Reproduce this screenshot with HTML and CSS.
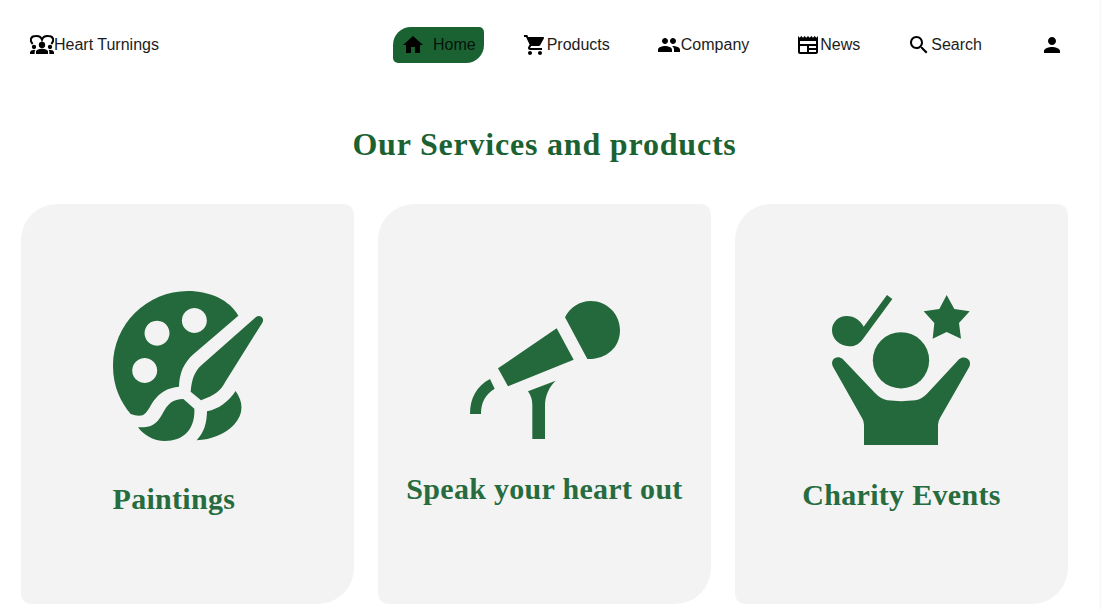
FILE: index.html
```html
<!DOCTYPE html>
<html lang="en">
<head>
<meta charset="utf-8">
<meta name="viewport" content="width=device-width, initial-scale=1">
<title>Heart Turnings</title>
<link rel="stylesheet" href="styles.css">
</head>
<body>
<div class="page">
  <header class="header">
    <a class="brand" href="#">
      <svg class="icon" viewBox="60 54 72 72" aria-hidden="true">
        <path d="M68 87C58 76 62 63 77 63C88 62 94 68 96 74C98 68 104 62 115 63C130 63 134 76 124 87" fill="none" stroke="#000" stroke-width="6"/>
        <circle cx="96" cy="90" r="9.500"/><circle cx="72" cy="96" r="6.500"/><circle cx="120" cy="96" r="6.500"/>
        <path d="M78 117V109Q81 101 96 101T114 109V117ZM60 117V111Q62 105 70 105H76Q74 108 74 111V117ZM132 117V111Q130 105 122 105H116Q118 108 118 111V117Z"/>
      </svg><span>Heart Turnings</span>
    </a>
    <nav class="nav" aria-label="Main">
      <a class="nav-link active" href="#" aria-current="page"><svg class="icon" viewBox="0 0 24 24" aria-hidden="true"><path d="M10 20v-6h4v6h5v-8h3L12 3 2 12h3v8z"/></svg><span>Home</span></a>
      <a class="nav-link" href="#"><svg class="icon" viewBox="0 0 24 24" aria-hidden="true"><path d="M7 18c-1.1 0-1.99.9-1.99 2S5.9 22 7 22s2-.9 2-2-.9-2-2-2zM1 2v2h2l3.6 7.59-1.35 2.45c-.16.28-.25.61-.25.96 0 1.1.9 2 2 2h12v-2H7.42c-.14 0-.25-.11-.25-.25l.03-.12.9-1.63h7.45c.75 0 1.41-.41 1.75-1.03l3.58-6.49c.08-.14.12-.31.12-.48 0-.55-.45-1-1-1H5.21l-.94-2H1zm16 16c-1.1 0-1.99.9-1.99 2s.89 2 1.99 2 2-.9 2-2-.9-2-2-2z"/></svg><span>Products</span></a>
      <a class="nav-link" href="#"><svg class="icon" viewBox="0 0 24 24" aria-hidden="true"><path d="M16 11c1.66 0 2.99-1.34 2.99-3S17.66 5 16 5c-1.66 0-3 1.34-3 3s1.34 3 3 3zm-8 0c1.66 0 2.99-1.34 2.99-3S9.66 5 8 5C6.34 5 5 6.34 5 8s1.34 3 3 3zm0 2c-2.33 0-7 1.17-7 3.5V19h14v-2.5c0-2.33-4.67-3.5-7-3.5zm8 0c-.29 0-.62.02-.97.05 1.16.84 1.97 1.97 1.97 3.45V19h6v-2.5c0-2.33-4.67-3.5-7-3.5z"/></svg><span>Company</span></a>
      <a class="nav-link" href="#"><svg class="icon" viewBox="0 0 24 24" aria-hidden="true"><path fill-rule="evenodd" d="M22 3l-1.67 1.67L18.67 3 17 4.67 15.33 3l-1.66 1.67L12 3l-1.67 1.67L8.67 3 7 4.67 5.33 3 3.67 4.67 2 3v16c0 1.1.9 2 2 2h16c1.1 0 2-.9 2-2V3zM11 19H4v-6h7v6zm9 0h-7v-2h7v2zm0-4h-7v-2h7v2zm0-4H4V8h16v3z"/></svg><span>News</span></a>
      <a class="nav-link" href="#"><svg class="icon" viewBox="0 0 24 24" aria-hidden="true"><path d="M15.5 14h-.79l-.28-.27C15.41 12.59 16 11.11 16 9.5 16 5.91 13.09 3 9.5 3S3 5.91 3 9.5 5.91 16 9.5 16c1.61 0 3.09-.59 4.23-1.57l.27.28v.79l5 4.99L20.49 19l-4.99-5zm-6 0C7.01 14 5 11.99 5 9.5S7.01 5 9.5 5 14 7.01 14 9.5 11.99 14 9.5 14z"/></svg><span>Search</span></a>
      <button class="account" type="button" aria-label="Account"><svg class="icon" viewBox="0 0 24 24" aria-hidden="true"><path d="M12 12c2.21 0 4-1.79 4-4s-1.79-4-4-4-4 1.79-4 4 1.79 4 4 4zm0 2c-2.67 0-8 1.34-8 4v2h16v-2c0-2.66-5.33-4-8-4z"/></svg></button>
    </nav>
  </header>
  <main class="services">
    <h1 class="title">Our Services and products</h1>
    <div class="cards">
      <section class="card">
        <div class="content paintings">
          <svg class="art" viewBox="39 33 450 450" aria-hidden="true">
            <path fill-rule="evenodd" d="M92 402C63 367 39 322 39 258C39 132 141 33 264 33C330 33 390 61 415 107L281 222C251 248 238 280 237 320C204 323 180 336 160 364C148 383 141 400 128 406Q112 410 92 402ZM283 84a37.500 37.500 0 1 0 .1 0ZM171 122a37.500 37.500 0 1 0 .1 0ZM134 234a37.500 37.500 0 1 0 .1 0Z"/>
            <path d="M468 111C480 102 495 115 487 128L377 304C361 334 346 345 303 361L272 335C275 301 282 275 305 255ZM114 442C153 443 169 435 187 402C203 371 219 357 250 357L283 386C286 448 250 483 195 483C160 483 132 466 114 442ZM290 481C313 456 320 430 321 394C358 386 384 366 407 333C431 368 431 402 402 434C373 463 335 478 290 481Z"/>
          </svg>
          <h2 class="label">Paintings</h2>
        </div>
      </section>
      <section class="card">
        <div class="content">
          <svg class="art wide" viewBox="30 33 450 414" aria-hidden="true">
            <path d="M315 82C330 52 359 33 392 33C441 33 480 72 480 120C480 174 438 209 382 207ZM290 115L341 209L144 289L114 235ZM90 267L104 296C76 313 63 337 63 372H30C30 324 50 288 90 267ZM204 304L287 272C267 291 255 318 255 345V447H217V345Q217 322 204 304Z"/>
          </svg>
          <h2 class="label">Speak your heart out</h2>
        </div>
      </section>
      <section class="card">
        <div class="content">
          <svg class="art" viewBox="21 30 450 450" aria-hidden="true">
            <circle cx="243" cy="226" r="84.500"/>
            <path d="M201 30L217 42L131 159C119 178 102 185 87 184C58 182 36 162 36 136C36 111 56 93 80 93C103 93 122 107 131 125ZM380 30L403 72L449 79L417 114L423 161L380 141L338 161L343 114L311 79L358 72ZM68 222L165 324Q181 341 202 346Q243 351 286 346Q306 341 321 326L417 223C434 208 458 225 448 245L360 399Q354 409 354 420V480H132V420Q132 408 126 399L39 245C28 224 51 208 68 222Z"/>
          </svg>
          <h2 class="label">Charity Events</h2>
        </div>
      </section>
    </div>
  </main>
</div>
</body>
</html>
```
FILE: styles.css
```css
* { box-sizing: border-box; }

body {
  margin: 0;
  background: #fff;
  color: #000;
  font-family: "Liberation Sans", Arial, sans-serif;
  font-size: 16px;
  line-height: 24px;
}

.page {
  min-height: 100vh;
  padding: 0 31px 5px 21px;
  border-right: 3px solid #fafafa;
}

.header {
  display: flex;
  align-items: center;
  justify-content: space-between;
  padding: 27px 0 0 9px;
}

.brand,
.nav-link {
  display: flex;
  align-items: center;
  color: #1c1c1c;
  text-decoration: none;
}

.icon {
  display: block;
  flex: none;
  width: 24px;
  height: 24px;
  fill: #000;
}

.nav {
  display: flex;
  align-items: center;
  gap: 31px;
}

.nav-link { padding: 6px 8px; }

.active {
  gap: 8px;
  border-radius: 18px 5px;
  background: #1b6233;
  color: #04140a;
}

.account {
  padding: 6px 4px 6px 19px;
  border: 0;
  background: none;
  cursor: pointer;
}

.title {
  margin: 61px 0 40px;
  color: #1b6233;
  font-family: "Liberation Serif", "Times New Roman", serif;
  font-size: 32px;
  line-height: 40px;
  letter-spacing: 0.025em;
  text-align: center;
}

.cards {
  display: grid;
  grid-template-columns: repeat(3, 1fr);
  gap: 24px;
}

.card {
  display: flex;
  align-items: center;
  justify-content: center;
  min-height: 400px;
  border-radius: 36px 10px;
  background: #f3f3f3;
}

.content {
  display: flex;
  flex-direction: column;
  align-items: center;
  gap: 33px;
}

.paintings {
  align-items: flex-start;
  gap: 41px;
  width: 150px;
}

.art {
  display: block;
  width: 150px;
  height: 150px;
  fill: #23693b;
}

.wide { height: 138px; }

.label {
  margin: 0;
  padding-bottom: 1px;
  color: #266c3e;
  font-family: "Liberation Serif", "Times New Roman", serif;
  font-size: 30px;
  line-height: 34px;
  letter-spacing: 0.01em;
  white-space: nowrap;
}
```
